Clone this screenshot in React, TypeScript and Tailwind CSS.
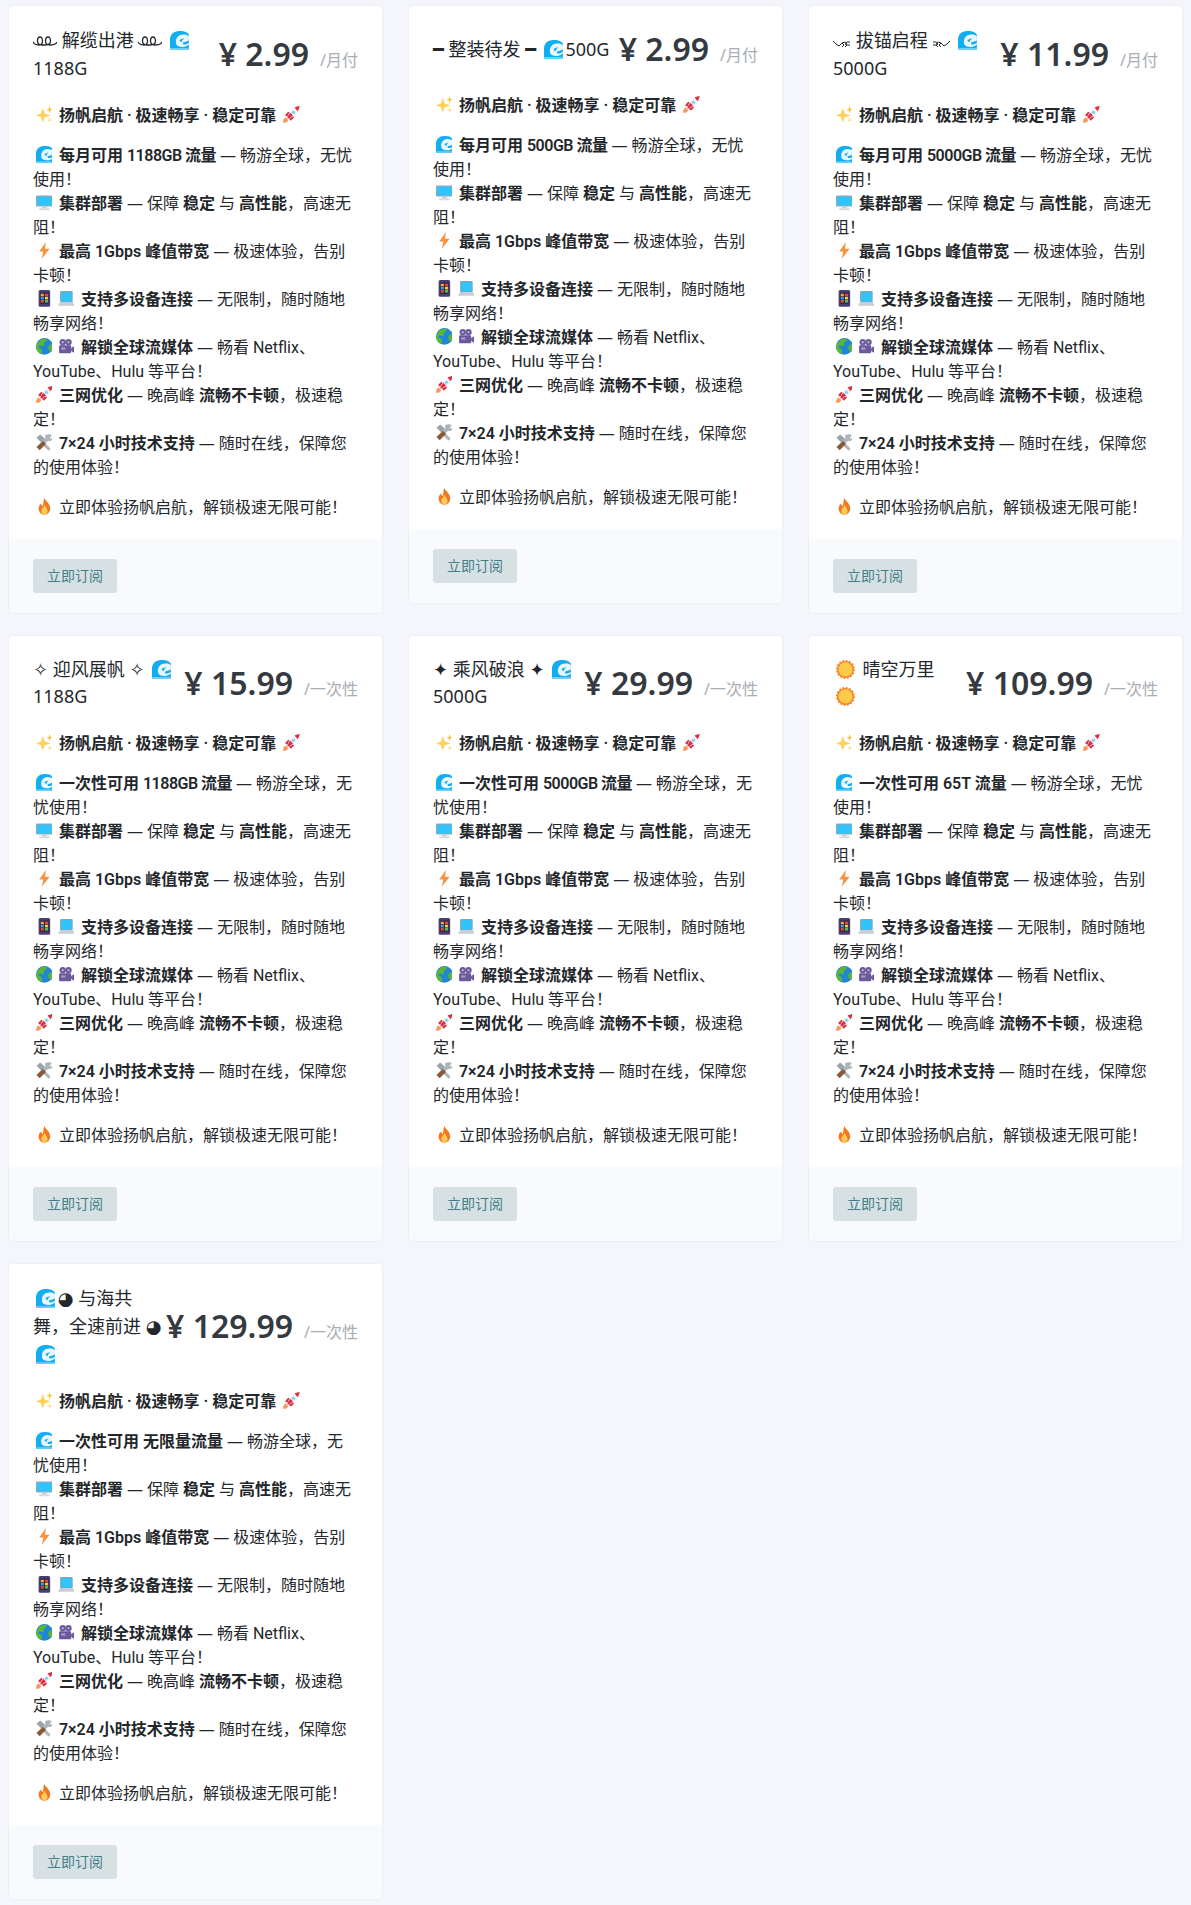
import React from "react";

type EmojiName =
  | "wave"
  | "sparkles"
  | "rocket"
  | "desktop"
  | "bolt"
  | "phone"
  | "laptop"
  | "globe"
  | "camera"
  | "tools"
  | "fire"
  | "sun";

const drawings: Record<EmojiName, React.ReactNode> = {
  wave: (
    <>
      <path d="M0 32V14C0 6 7 0 15 0h4c6 0 10 2 13 6v26z" fill="#12aef2" />
      <path d="M10 20C9 11 16 5 24 6c3 0 6 1 8 3v7c-3 1-6 3-9 3-2 2-1 4 1 4 3 0 6-1 8-3v3c-4 3-8 5-12 4-6 0-10-3-10-7z" fill="#eaf8fe" />
      <path d="M16 17c1-3 4-5 8-4-2 1-4 3-4 6z" fill="#12aef2" />
      <path d="M0 29h32v3H0z" fill="#6ad0f7" />
    </>
  ),
  sparkles: (
    <>
      <path d="M13 4l3.500 10.500L28 18l-11.500 3.500L13 32l-3.500-10.500L0 18l9.500-3.500z" fill="#fdd258" />
      <path d="M26 0l1.700 5.300L32 7l-4.300 1.700L26 14l-1.700-5.300L20 7l4.300-1.700z" fill="#fcc342" />
      <path d="M26 21l1.300 4.700L32 27l-4.700 1.300L26 32l-1.300-3.700L21 27l3.700-1.300z" fill="#fde08a" />
    </>
  ),
  rocket: (
    <>
      <path d="M0 32c0-6 2-9 5-10l5 5c-1 3-4 5-10 5z" fill="#f79a5c" />
      <path d="M4 17l6-6 3 2-5 8zM15 28l6-6-2-3-8 5z" fill="#dd2e44" />
      <path d="M8 24C9 13 18 4 32 0c-4 14-13 23-24 24z" fill="#eef1f3" />
      <path d="M22 3c3-1 7-3 10-3-1 3-2 7-4 10z" fill="#dd2e44" />
      <path d="M8 24c1-4 3-8 6-11l5 5c-3 3-7 5-11 6z" fill="#dd2e44" />
      <circle cx="20" cy="12" r="3" fill="#88c9f9" />
    </>
  ),
  desktop: (
    <>
      <rect x="0" y="3" width="32" height="21" rx="2" fill="#9aa6b2" />
      <rect x="2" y="5" width="28" height="17" fill="#2fc4fb" />
      <path d="M11 24h10v3H11z" fill="#c8ced3" />
      <rect x="6" y="27" width="20" height="4" rx="1" fill="#d5dade" />
    </>
  ),
  bolt: <path d="M19 0L6 18h8l-3 14 15-19h-9z" fill="#f8923e" />,
  phone: (
    <>
      <rect x="5" y="0" width="22" height="32" rx="3" fill="#4a3d72" />
      <rect x="8" y="5" width="16" height="21" fill="#22223a" />
      <rect x="9" y="7" width="6" height="5" fill="#f2a33a" />
      <rect x="17" y="7" width="6" height="5" fill="#e0483e" />
      <rect x="9" y="13" width="6" height="5" fill="#3a9ce0" />
      <rect x="17" y="13" width="6" height="5" fill="#f5cc44" />
      <rect x="9" y="19" width="6" height="5" fill="#e0483e" />
      <rect x="17" y="19" width="6" height="5" fill="#5cb85c" />
    </>
  ),
  laptop: (
    <>
      <rect x="4" y="2" width="24" height="22" rx="2" fill="#8fa0ae" />
      <rect x="6" y="4" width="20" height="18" fill="#2fc4fb" />
      <path d="M3 24h26l3 6H0z" fill="#c8ced3" />
    </>
  ),
  globe: (
    <>
      <circle cx="16" cy="16" r="16" fill="#1f88d0" />
      <path d="M8 4c4-2 9-3 13-2l-2 5-4 1 1 4-4 4-5-2-3 4 5 2 3 5-2 6C5 29 1 23 0 17c2-5 4-9 8-13zM26 12l5 1c1 5 1 10-2 13l-4-2-2-5z" fill="#5cb43c" />
    </>
  ),
  camera: (
    <>
      <circle cx="9" cy="8" r="6" fill="#6a5a9c" />
      <circle cx="20" cy="8" r="6" fill="#6a5a9c" />
      <circle cx="9" cy="8" r="2" fill="#c9c3dd" />
      <circle cx="20" cy="8" r="2" fill="#c9c3dd" />
      <rect x="2" y="14" width="23" height="15" rx="2" fill="#6a5a9c" />
      <path d="M25 19l7-4v14l-7-4z" fill="#6a5a9c" />
      <rect x="6" y="18" width="8" height="4" fill="#a79fc6" />
    </>
  ),
  tools: (
    <>
      <path d="M22 1c3-1 6 0 8 2l-4 4 2 2 3-3c1 3 0 6-3 7-2 1-3 1-5 0l-6 6-5-5 6-6c-1-2-1-4 0-6 1-1 2-1 4-1z" fill="#aeb5bc" />
      <path d="M14 14l4 4 9 9c1 2-2 5-4 4l-9-9-4-4z" fill="#aeb5bc" />
      <path d="M1 25l12-12 6 6L7 31z" fill="#8a5a3c" />
      <path d="M1 7l7-6 9 8-7 7z" fill="#9aa2aa" />
    </>
  ),
  fire: (
    <>
      <path d="M16 0c1 5 11 10 11 20 0 7-5 12-11 12S5 27 5 20c0-5 3-8 5-10 0 3 1 5 3 5 2-4 0-10 3-15z" fill="#f4771f" />
      <path d="M16 13c1 4 6 7 6 12 0 4-3 7-6 7s-6-3-6-7c0-5 5-7 6-12z" fill="#fdcb58" />
    </>
  ),
  sun: (
    <>
      <circle cx="16" cy="16" r="14.500" fill="#f4832a" />
      <circle cx="16" cy="16" r="14.500" fill="none" stroke="#f4832a" strokeWidth="3" strokeDasharray="3 2.700" />
      <circle cx="16" cy="16" r="12" fill="#fdcb4a" />
    </>
  ),
};

// takes the room of a colour emoji glyph in the text, 1.375em wide
const Emoji = ({ name }: { name: EmojiName }) => (
  <svg viewBox="0 0 32 32" className="mx-[0.1625em] inline-block h-[1.05em] w-[1.05em] align-[-0.14em]">
    {drawings[name]}
  </svg>
);

const Curls = () => (
  <svg viewBox="0 0 24 10" className="inline-block h-[10px] w-[24px] align-[1px]" fill="none" stroke="#23272b" strokeWidth="1.300">
    <path d="M0 6C1 8 3 9 6 9C8 9 9.500 7.500 9.500 5C9.500 2.500 8.500 1 7 1C5.500 1 4.500 2.500 4.500 5C4.500 7.500 6 9 9 9H12C15 9 17.500 7.500 17.500 5C17.500 2.500 16.500 1 15 1C13.500 1 12.500 2.500 12.500 5C12.500 7.500 14 9 17 9C20 9 23 8 24 6" />
  </svg>
);

const Anchor = ({ flip }: { flip?: boolean }) => (
  <svg viewBox="0 0 18 8" className={flip ? "inline-block h-[8px] w-[18px] align-[-1px] -scale-x-100" : "inline-block h-[8px] w-[18px] align-[-1px]"} fill="none" stroke="#23272b" strokeWidth="1">
    <path d="M0 1l3 3 3 2 3-3 2 2-2 2M9 3l3-1 2 1-2 1 2 1-2 2M14 2h3M14 5h3" />
  </svg>
);

const Glyph = ({ children }: { children: string }) => (
  <span className="font-['DejaVu_Sans'] leading-none">{children}</span>
);

// Roboto's own dash is too short, this one is a full 1em
const Dash = () => <span className="font-['Noto_Sans'] leading-none">—</span>;

const Title = ({ id }: { id: number }) => {
  if (id === 1) return <><Curls /> 解缆出港 <Curls /> <Emoji name="wave" /> 1188G</>;
  if (id === 2) return <><Glyph>━</Glyph> 整装待发 <Glyph>━</Glyph> <Emoji name="wave" />500G</>;
  if (id === 3) return <><Anchor /> 拔锚启程 <Anchor flip /> <Emoji name="wave" /> 5000G</>;
  if (id === 4) return <><Glyph>✧</Glyph> 迎风展帆 <Glyph>✧</Glyph> <Emoji name="wave" /> 1188G</>;
  if (id === 5) return <><Glyph>✦</Glyph> 乘风破浪 <Glyph>✦</Glyph> <Emoji name="wave" /> 5000G</>;
  if (id === 6) return <><Emoji name="sun" /> 晴空万里<br /><Emoji name="sun" /></>;
  return <><Emoji name="wave" /><Glyph>◕</Glyph> 与海共舞，全速前进 <Glyph>◕</Glyph><Emoji name="wave" /></>;
};

interface planType {
  id: number;
  price: string;
  unit: string;
  label: string;
  amount: string;
  tight: boolean;
  leading: string;
}

const plans: planType[] = [
  { id: 1, price: "2.99", unit: "/月付", label: "每月可用", amount: "1188GB 流量", tight: true, leading: "leading-[28px]" },
  { id: 2, price: "2.99", unit: "/月付", label: "每月可用", amount: "500GB 流量", tight: true, leading: "leading-[28px]" },
  { id: 3, price: "11.99", unit: "/月付", label: "每月可用", amount: "5000GB 流量", tight: true, leading: "leading-[28px]" },
  { id: 4, price: "15.99", unit: "/一次性", label: "一次性可用", amount: "1188GB 流量", tight: true, leading: "leading-[27px]" },
  { id: 5, price: "29.99", unit: "/一次性", label: "一次性可用", amount: "5000GB 流量", tight: true, leading: "leading-[27px]" },
  { id: 6, price: "109.99", unit: "/一次性", label: "一次性可用", amount: "65T 流量", tight: false, leading: "leading-[27px]" },
  { id: 7, price: "129.99", unit: "/一次性", label: "一次性可用", amount: "无限量流量", tight: false, leading: "leading-[28px]" },
];

const PlanCard = ({ plan }: { plan: planType }) => (
  <div className="self-start overflow-hidden rounded-[3px] bg-white shadow-[0_0_2px_rgba(60,70,100,0.12)]">
    <div className="px-6 pt-5 pb-[19px]">
      <div className="mb-[22px] flex items-center">
        <div className={`min-w-0 flex-1 font-['Noto_Sans','Noto_Sans_CJK_SC',sans-serif] text-[18px] text-[#23272b] ${plan.leading}`}>
          <Title id={plan.id} />
        </div>
        <div className="shrink-0 whitespace-nowrap font-['Noto_Sans','Noto_Sans_CJK_SC',sans-serif] text-[32px] leading-[46px] font-semibold text-[#343a40]">
          ¥ {plan.price}
          <span className="ml-[11px] text-[16px] leading-none font-normal text-[#a9adb5]">{plan.unit}</span>
        </div>
      </div>
      <p className="mb-4 font-semibold">
        <Emoji name="sparkles" /> 扬帆启航 · 极速畅享 · 稳定可靠 <Emoji name="rocket" />
      </p>
      <p className="mb-4">
        <Emoji name="wave" /> <strong className="font-semibold">{plan.label} <span className={plan.tight ? "tracking-[-0.5px]" : ""}>{plan.amount}</span></strong> <Dash /> 畅游全球，无忧使用！
        <br />
        <Emoji name="desktop" /> <strong className="font-semibold">集群部署</strong> <Dash /> 保障 <strong className="font-semibold">稳定</strong> 与 <strong className="font-semibold">高性能</strong>，高速无阻！
        <br />
        <Emoji name="bolt" /> <strong className="font-semibold">最高 1Gbps 峰值带宽</strong> <Dash /> 极速体验，告别卡顿！
        <br />
        <Emoji name="phone" /><Emoji name="laptop" /> <strong className="font-semibold">支持多设备连接</strong> <Dash /> 无限制，随时随地畅享网络！
        <br />
        <Emoji name="globe" /><Emoji name="camera" /> <strong className="font-semibold">解锁全球流媒体</strong> <Dash /> 畅看 Netflix、YouTube、Hulu 等平台！
        <br />
        <Emoji name="rocket" /> <strong className="font-semibold">三网优化</strong> <Dash /> 晚高峰 <strong className="font-semibold">流畅不卡顿</strong>，极速稳定！
        <br />
        <Emoji name="tools" /> <strong className="font-semibold">7×24 小时技术支持</strong> <Dash /> 随时在线，保障您的使用体验！
      </p>
      <p>
        <Emoji name="fire" /> 立即体验扬帆启航，解锁极速无限可能！
      </p>
    </div>
    <div className="bg-[#f9fafc] px-6 py-5">
      <button className="h-[34px] rounded-[3px] bg-[#d7e1e4] px-[14px] text-[14px] text-[#3f7f8a]">立即订阅</button>
    </div>
  </div>
);

export default function App() {
  return (
    <div className="min-h-[1905px] bg-[#f5f6fb] font-['Roboto','Noto_Sans_CJK_SC',sans-serif] text-[16px] leading-6 text-[#23272b]">
      <div className="grid grid-cols-3 gap-x-[27px] gap-y-[23px] px-[9px] pt-[6px]">
        {plans.map((plan) => (
          <PlanCard key={plan.id} plan={plan} />
        ))}
      </div>
    </div>
  );
}
